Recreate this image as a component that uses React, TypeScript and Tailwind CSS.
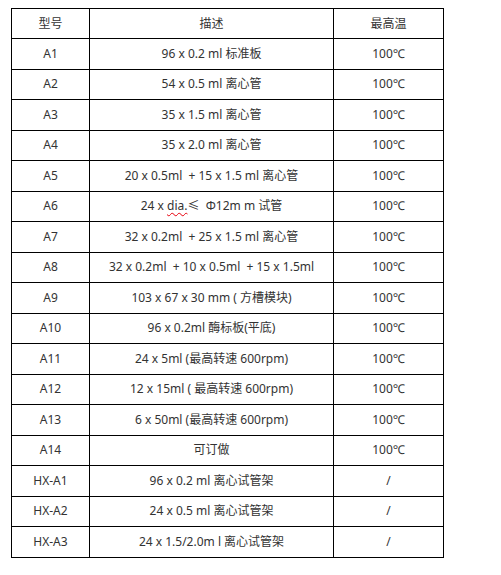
import React from 'react'

// Product rows: model, description, max temperature
const rows: [string, React.ReactNode, string][] = [
  ['A1', '96 x 0.2 ml 标准板', '100℃'],
  ['A2', '54 x 0.5 ml 离心管', '100℃'],
  ['A3', '35 x 1.5 ml 离心管', '100℃'],
  ['A4', '35 x 2.0 ml 离心管', '100℃'],
  ['A5', '20 x 0.5ml  + 15 x 1.5 ml 离心管', '100℃'],
  [
    'A6',
    <>
      24 x <span className="underline decoration-wavy decoration-red-600 decoration-1 underline-offset-2">dia.</span>≤{'  '}Φ12m m 试管
    </>,
    '100℃',
  ],
  ['A7', '32 x 0.2ml  + 25 x 1.5 ml 离心管', '100℃'],
  ['A8', '32 x 0.2ml  + 10 x 0.5ml  + 15 x 1.5ml', '100℃'],
  ['A9', '103 x 67 x 30 mm ( 方槽模块)', '100℃'],
  ['A10', '96 x 0.2ml 酶标板(平底)', '100℃'],
  ['A11', '24 x 5ml (最高转速 600rpm)', '100℃'],
  ['A12', '12 x 15ml ( 最高转速 600rpm)', '100℃'],
  ['A13', '6 x 50ml (最高转速 600rpm)', '100℃'],
  ['A14', '可订做', '100℃'],
  ['HX-A1', '96 x 0.2 ml 离心试管架', '/'],
  ['HX-A2', '24 x 0.5 ml 离心试管架', '/'],
  ['HX-A3', '24 x 1.5/2.0m l 离心试管架', '/'],
]

export default function App() {
  return (
    <div
      className="min-h-[575px] w-[501px] bg-white pt-[8px] pl-[11px] text-[12px] text-[#333]"
      style={{ fontFamily: '"Noto Sans", "Noto Sans CJK SC", sans-serif' }}
    >
      <table className="w-[433px] table-fixed border-collapse border border-black text-center">
        <colgroup>
          <col className="w-[78px]" />
          <col className="w-[244px]" />
          <col className="w-[110px]" />
        </colgroup>
        <thead>
          <tr className="h-[30px]">
            <th className="border border-black p-0 font-normal">型号</th>
            <th className="border border-black p-0 font-normal">描述</th>
            <th className="border border-black p-0 font-normal">最高温</th>
          </tr>
        </thead>
        <tbody>
          {rows.map(([model, desc, temp]) => (
            <tr key={model} className="h-[30.5px]">
              <td className="border border-black p-0">{model}</td>
              <td className="whitespace-pre border border-black p-0">{desc}</td>
              <td className="border border-black p-0">{temp}</td>
            </tr>
          ))}
        </tbody>
      </table>
    </div>
  )
}
